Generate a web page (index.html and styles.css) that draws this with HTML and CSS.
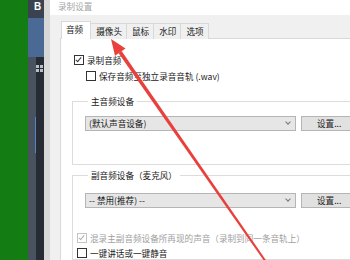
FILE: index.html
```html
<!DOCTYPE html>
<html lang="zh-CN">
<head>
  <meta charset="UTF-8" />
  <title>录制设置</title>
  <link rel="stylesheet" href="styles.css">
</head>
<body>
  <div class="desk">
    <div class="green"></div>
    <div class="taskbar">
      <div class="tb-top">B</div>
      <div class="tb-blue"></div>
      <div class="tb-rest">
        <div class="tb-a"><span class="tb-line"></span></div>
        <div class="tb-b">
          <span class="grid-icon"><i></i><i></i><i></i><i></i></span>
        </div>
      </div>
    </div>
    <div class="frame"></div>

    <div class="dialog">
      <div class="titlebar">录制设置</div>
      <div class="body">
        <div class="tabs">
          <div class="tab active">音频</div>
          <div class="tab">摄像头</div>
          <div class="tab">鼠标</div>
          <div class="tab">水印</div>
          <div class="tab">选项</div>
        </div>
        <div class="pane">
          <label class="check first"><span class="box checked"></span>录制音频</label>
          <label class="check sub"><span class="box"></span>保存音频至独立录音音轨 (.wav)</label>

          <fieldset class="group g1">
            <legend>主音频设备</legend>
            <div class="device">
              <div class="select">(默认声音设备)<span class="chev"></span></div>
              <button class="btn">设置...</button>
            </div>
          </fieldset>

          <fieldset class="group g2">
            <legend>副音频设备（麦克风）</legend>
            <div class="device">
              <div class="select">-- 禁用(推荐) --<span class="chev"></span></div>
              <button class="btn">设置...</button>
            </div>
            <label class="check disabled mix"><span class="box checked"></span>混录主副音频设备所再现的声音（录制到同一条音轨上）</label>
            <label class="check"><span class="box"></span>一键讲话或一键静音</label>
          </fieldset>
        </div>
      </div>
    </div>
  </div>

  <!-- red pointer drawn over the screenshot -->
  <svg class="arrow" width="350" height="260" viewBox="0 0 350 260">
    <polygon points="266.8,261.4 265.2,262.6 118.6,53.2 121.6,51.0" fill="#e8403c"/>
    <polygon points="111,39 125.5,48.4 115,55.8" fill="#e8403c"/>
  </svg>
</body>
</html>
```

FILE: styles.css
```css
body {
  margin: 0;
  width: 350px;
  height: 260px;
  overflow: hidden;
  position: relative;
  font-family: "Noto Sans CJK SC", "Liberation Sans", sans-serif;
  font-size: 8.6px;
  line-height: 12px;
  color: #1a1a1a;
}

.desk {
  display: flex;
  height: 260px;
}

.green {
  width: 28px;
  background-color: #137c13;
}

.taskbar {
  width: 16px;
  display: flex;
  flex-direction: column;
}

.tb-top {
  height: 18px;
  background-color: #3a4250;
  color: #fff;
  font-family: "Liberation Sans", sans-serif;
  font-weight: bold;
  font-size: 10px;
  line-height: 14px;
  padding-left: 6px;
}

.tb-blue {
  height: 39px;
  background-color: #4a6a95;
}

.tb-rest {
  flex: 1;
  display: flex;
}

.tb-a {
  width: 8px;
  background-color: #49525f;
  position: relative;
}

.tb-line {
  position: absolute;
  right: 0;
  top: 60px;
  width: 1px;
  height: 36px;
  background-color: #4f86c8;
}

.tb-b {
  width: 8px;
  background-color: #272c34;
  padding-top: 8px;
}

.grid-icon {
  display: grid;
  grid-template-columns: 3px 3px;
  gap: 1px;
}

.grid-icon i {
  height: 3px;
  background-color: #b8bec8;
}

.frame {
  width: 6px;
  background-color: #d8d8d8;
}

.dialog {
  flex: 1;
  display: flex;
  flex-direction: column;
  background-color: #f0f0f0;
  min-width: 0;
}

.titlebar {
  height: 17px;
  background-color: #fff;
  color: #a6a6a6;
  padding-left: 8px;
  line-height: 13px;
}

.body {
  flex: 1;
  display: flex;
  flex-direction: column;
  padding: 7px 0 0 10px;
}

.tabs {
  display: flex;
  align-items: flex-end;
  height: 17px;
  padding-left: 1px;
  margin-bottom: -1px;
  position: relative;
  z-index: 1;
}

.tab {
  height: 15px;
  line-height: 15px;
  padding: 0 4px 0 5px;
  border: 1px solid #d9d9d9;
  border-bottom: none;
  border-left: none;
  background-color: #f0f0f0;
}

.tab.active {
  height: 16px;
  border-left: 1px solid #d9d9d9;
  background-color: #fff;
  padding: 0 7px 1px 4px;
}

.pane {
  flex: 1;
  background-color: #fff;
  border: 1px solid #d9d9d9;
  border-right: none;
  border-bottom: none;
  padding: 0 0 0 11px;
}

.check {
  display: flex;
  align-items: center;
  height: 12px;
  gap: 3px;
  white-space: nowrap;
}

.check.first {
  margin-top: 15px;
  padding-left: 2px;
}

.check.sub {
  margin-top: 4px;
  padding-left: 14px;
}

.box {
  width: 8px;
  height: 8px;
  border: 1px solid #333;
  background-color: #fff;
  position: relative;
  flex: none;
}

.box.checked::after {
  content: "";
  position: absolute;
  left: 2px;
  top: 0;
  width: 2px;
  height: 5px;
  border: solid #333;
  border-width: 0 1px 1px 0;
  transform: rotate(40deg);
}

.check.disabled {
  color: #a0a0a0;
}

.check.disabled .box {
  border-color: #c4c4c4;
}

.check.disabled .box.checked::after {
  border-color: #b0b0b0;
}

.group {
  width: 320px;
  margin: 0;
  padding: 9px 0 33px 12px;
  border: 1px solid #dcdcdc;
  border-right: none;
}

.group legend {
  padding: 0 3px;
  margin-left: 3px;
  line-height: 12px;
}

.g1 {
  margin-top: 13px;
}

.g2 {
  margin-top: 4px;
  padding-top: 12px;
  padding-bottom: 0;
}

.device {
  display: flex;
  gap: 5px;
}

.select {
  width: 206px;
  height: 13px;
  line-height: 13px;
  padding: 0 0 0 3px;
  border: 1px solid #b5b5b5;
  background-color: #e6e6e6;
  position: relative;
  box-sizing: content-box;
}

.chev {
  position: absolute;
  right: 5px;
  top: 3px;
  width: 3px;
  height: 3px;
  border: solid #777;
  border-width: 0 1px 1px 0;
  transform: rotate(45deg);
}

.btn {
  width: 50px;
  height: 15px;
  padding: 0 0 0 15px;
  border: 1px solid #b5b5b5;
  background-color: #e1e1e1;
  font-family: inherit;
  font-size: inherit;
  line-height: 13px;
  color: #1a1a1a;
  text-align: left;
}

.check.mix {
  margin-top: 24px;
  margin-left: -8px;
}

.g2 .check + .check {
  margin-top: 3px;
  margin-left: -8px;
}

.arrow {
  position: absolute;
  left: 0;
  top: 0;
  pointer-events: none;
}
```
